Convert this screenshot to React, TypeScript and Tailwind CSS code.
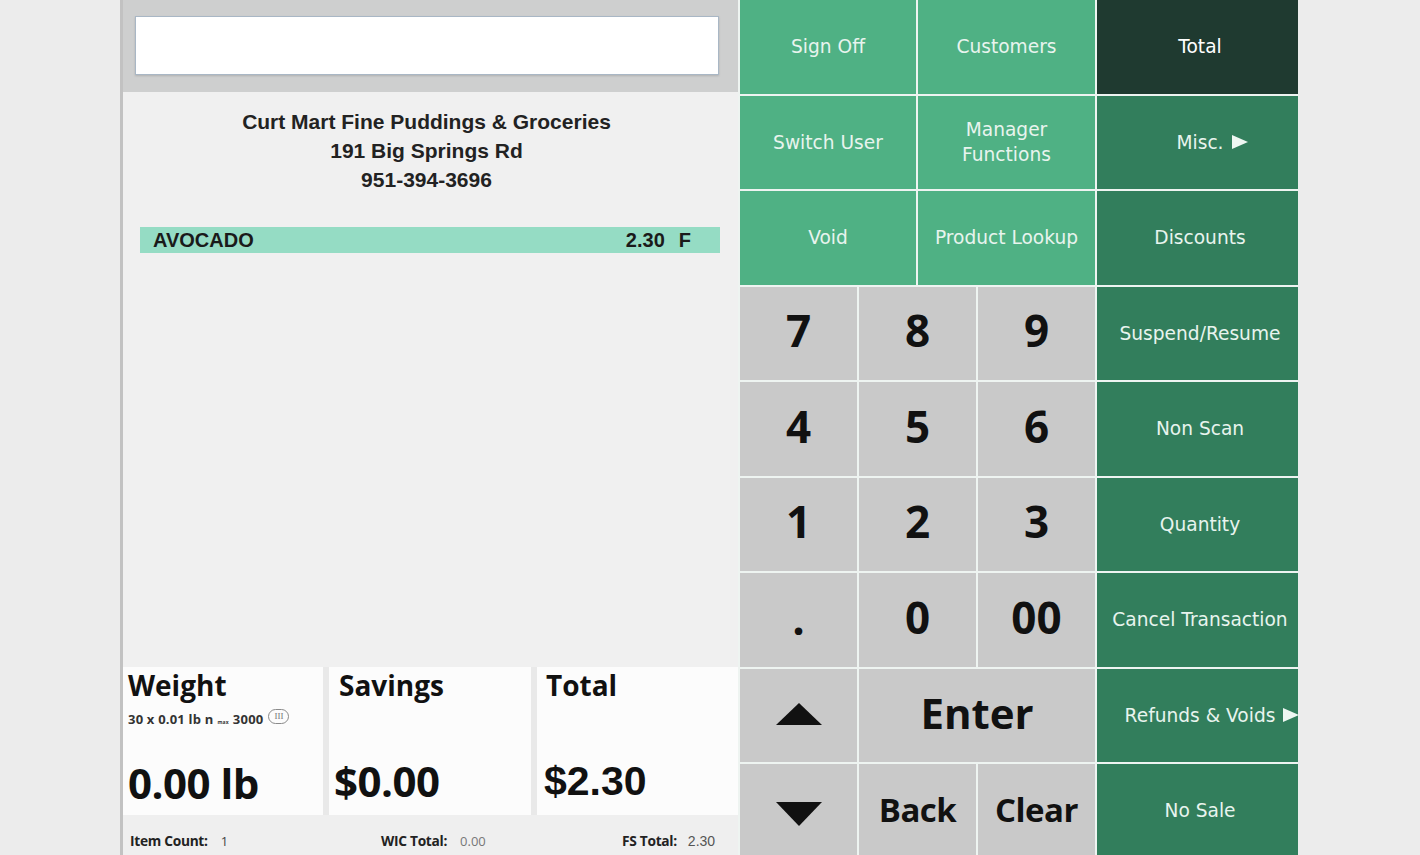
import React from "react";

const greenText = "font-['DejaVu_Sans',sans-serif] text-[18.6px] text-[#e8f4ee]";

function Arrow() {
    return (
        <svg
            width="16"
            height="16"
            viewBox="0 0 16 16"
            className="absolute left-full top-1/2 -translate-y-1/2 ml-[8px]"
        >
            <polygon points="0,1 16,8 0,15" fill="#eef7f2" />
        </svg>
    );
}

function GreenKey({
    label,
    dark,
    arrow,
}: {
    label: React.ReactNode;
    dark?: boolean;
    arrow?: boolean;
}) {
    return (
        <div
            className={`flex items-center justify-center text-center leading-[25px] ${greenText} ${
                dark ? "bg-[#327e5c] pl-[5px]" : "bg-[#4fb184]"
            }`}
        >
            <span className="relative whitespace-nowrap">
                {label}
                {arrow && <Arrow />}
            </span>
        </div>
    );
}

function PadKey({
    children,
    className = "",
}: {
    children: React.ReactNode;
    className?: string;
}) {
    return (
        <div
            className={`flex items-center justify-center bg-[#c9c9c9] font-['Open_Sans',sans-serif] font-bold text-[#111] ${className}`}
        >
            {children}
        </div>
    );
}

export default function App() {
    return (
        <div className="w-[1420px] h-[855px] bg-[#ececec] flex overflow-hidden">
            {/* left: receipt side */}
            <div className="ml-[120px] w-[618px] h-full border-l-[3px] border-[#c2c2c2] flex flex-col">
                <div className="h-[92px] bg-[#cecfcf] pt-[16px] pl-[12px] pr-[19px]">
                    <div className="h-[59px] bg-white border border-[#a9b7c5] shadow-[0_1px_2px_rgba(0,0,0,0.15)]" />
                </div>

                <div className="flex-1 bg-[#f0f0f0] pt-[15px]">
                    <div className="text-center font-['Liberation_Sans',Arial,sans-serif] font-bold text-[21px] leading-[29px] text-[#222] pr-[8px]">
                        <p>Curt Mart Fine Puddings &amp; Groceries</p>
                        <p>191 Big Springs Rd</p>
                        <p>951-394-3696</p>
                    </div>
                    <div className="mt-[33px] ml-[17px] mr-[18px] h-[26px] bg-[#95dcc4] flex items-center justify-between pl-[13px] pr-[29px] font-['Liberation_Sans',Arial,sans-serif] font-bold text-[20px] text-[#1a1a1a]">
                        <span>AVOCADO</span>
                        <span className="flex gap-[14px]">
                            <span>2.30</span>
                            <span>F</span>
                        </span>
                    </div>
                </div>

                <div className="h-[148px] bg-[#e9e9e9] flex gap-[6px]">
                    <div className="w-[200px] bg-[#fcfcfc] flex flex-col pl-[5px] font-['Open_Sans',sans-serif] text-[#111]">
                        <p className="font-bold text-[28px] leading-[36px]">Weight</p>
                        <p className="flex items-center font-bold text-[13px] text-[#333] tracking-[0.2px] leading-[18px] mt-[3px]">
                            30 x 0.01 lb n
                            <span className="text-[5px] mx-[4px] mt-[7px]">max</span>
                            3000
                            <span className="ml-[5px] mb-[4px] w-[21px] h-[15px] rounded-full border border-[#8a8a8a] text-[#777] text-[9px] leading-[13px] text-center font-['Liberation_Serif',serif] font-normal tracking-normal">
                                III
                            </span>
                        </p>
                        <p className="mt-auto mb-[7px] font-bold text-[42px] leading-[50px] tracking-[-0.5px]">
                            0.00 lb
                        </p>
                    </div>
                    <div className="w-[202px] bg-[#fcfcfc] flex flex-col pl-[10px] font-['Open_Sans',sans-serif] text-[#111]">
                        <p className="font-bold text-[28px] leading-[36px]">Savings</p>
                        <p className="mt-auto mb-[9px] -ml-[5px] font-bold text-[42px] leading-[50px] tracking-[-0.5px]">
                            $0.00
                        </p>
                    </div>
                    <div className="flex-1 bg-[#fcfcfc] flex flex-col pl-[7px] text-[#111]">
                        <p className="pl-[2px] font-['Open_Sans',sans-serif] font-bold text-[28px] leading-[36px]">
                            Total
                        </p>
                        <p className="mt-auto mb-[10px] font-['Liberation_Sans',Arial,sans-serif] font-bold text-[41px] leading-[48px]">
                            $2.30
                        </p>
                    </div>
                </div>

                <div className="h-[40px] bg-[#efefef] flex items-center pl-[7px] pt-[13px] font-['Open_Sans',sans-serif] text-[13.75px] text-[#222]">
                    <div className="w-[251px] flex items-baseline">
                        <span className="font-bold tracking-[-0.3px]">Item Count:</span>
                        <span className="ml-[13px] text-[#444] text-[13px]">1</span>
                    </div>
                    <div className="w-[241px] flex items-baseline">
                        <span className="font-bold tracking-[-0.3px]">WIC Total:</span>
                        <span className="ml-[13px] text-[#777] text-[13px]">0.00</span>
                    </div>
                    <div className="flex items-baseline">
                        <span className="font-bold tracking-[-0.3px]">FS Total:</span>
                        <span className="ml-[11px] text-[#555] font-['Liberation_Sans',Arial,sans-serif] text-[14px]">
                            2.30
                        </span>
                    </div>
                </div>
            </div>

            {/* right: function keys + keypad */}
            <div className="w-[560px] h-full bg-[#eef4f1] pl-[2px] flex flex-col gap-[2px]">
                <div className="grid grid-cols-[176px_177px_201px] grid-rows-[93.5px_93.5px_93.5px] gap-[2px]">
                    <GreenKey label="Sign Off" />
                    <GreenKey label="Customers" />
                    <div className="flex items-center justify-center pl-[5px] bg-[#1f3a30] font-['DejaVu_Sans',sans-serif] text-[18.6px] text-white">
                        Total
                    </div>
                    <GreenKey label="Switch User" />
                    <GreenKey
                        label={
                            <>
                                Manager
                                <br />
                                Functions
                            </>
                        }
                    />
                    <GreenKey label="Misc." dark arrow />
                    <GreenKey label="Void" />
                    <GreenKey label="Product Lookup" />
                    <GreenKey label="Discounts" dark />
                </div>

                <div className="grid grid-cols-[117px_117px_117px_201px] grid-rows-[93.5px_93.5px_93.5px_93.5px_93.5px_93.5px] gap-[2px]">
                    <PadKey className="text-[44px] pb-[6px]">7</PadKey>
                    <PadKey className="text-[44px] pb-[6px]">8</PadKey>
                    <PadKey className="text-[44px] pb-[6px]">9</PadKey>
                    <GreenKey label="Suspend/Resume" dark />

                    <PadKey className="text-[44px] pb-[6px]">4</PadKey>
                    <PadKey className="text-[44px] pb-[6px]">5</PadKey>
                    <PadKey className="text-[44px] pb-[6px]">6</PadKey>
                    <GreenKey label="Non Scan" dark />

                    <PadKey className="text-[44px] pb-[6px]">1</PadKey>
                    <PadKey className="text-[44px] pb-[6px]">2</PadKey>
                    <PadKey className="text-[44px] pb-[6px]">3</PadKey>
                    <GreenKey label="Quantity" dark />

                    <PadKey className="text-[44px] pb-[4px]">.</PadKey>
                    <PadKey className="text-[44px] pb-[6px]">0</PadKey>
                    <PadKey className="text-[44px] pb-[6px]">00</PadKey>
                    <GreenKey label="Cancel Transaction" dark />

                    <PadKey>
                        <svg width="48" height="24" viewBox="0 0 48 24" className="mb-[3px]">
                            <polygon points="24,1 47,23 1,23" fill="#111" />
                        </svg>
                    </PadKey>
                    <PadKey className="col-span-2 text-[42px] pb-[5px]">Enter</PadKey>
                    <GreenKey label="Refunds & Voids" dark arrow />

                    <PadKey>
                        <svg width="48" height="26" viewBox="0 0 48 26" className="mt-[6px]">
                            <polygon points="1,1 47,1 24,25" fill="#111" />
                        </svg>
                    </PadKey>
                    <PadKey className="text-[33px] tracking-[-0.5px] pb-[2px]">Back</PadKey>
                    <PadKey className="text-[33px] tracking-[-0.5px] pb-[2px]">Clear</PadKey>
                    <GreenKey label="No Sale" dark />
                </div>
            </div>
        </div>
    );
}
